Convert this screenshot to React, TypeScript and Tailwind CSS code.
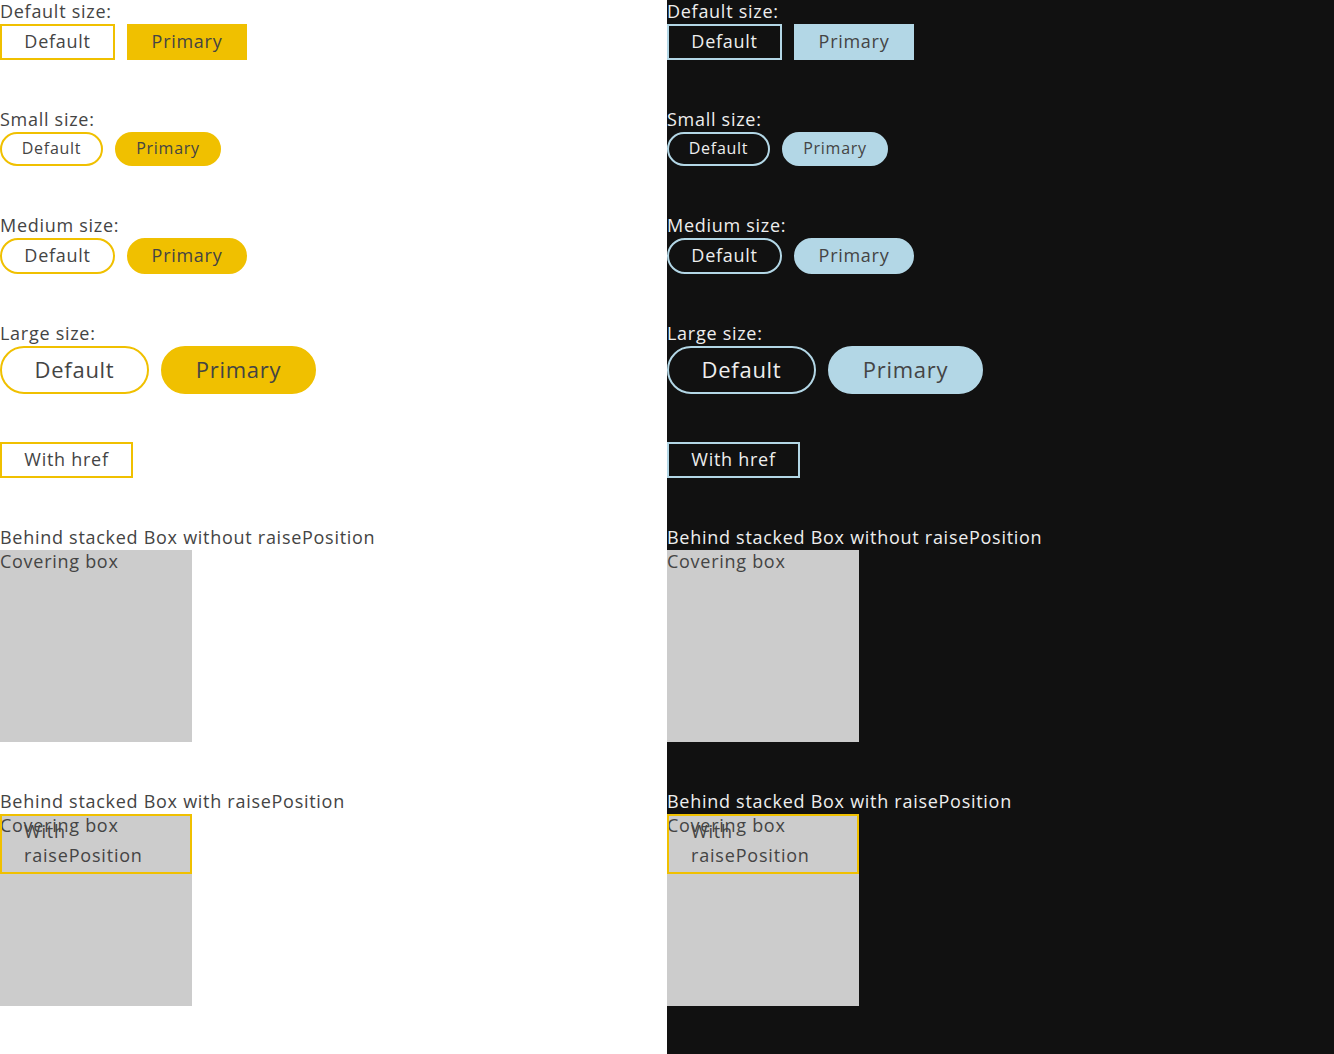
import React from "react";

function Panel({ dark }: { dark: boolean }) {
  const text = dark ? "text-[#eeeeee]" : "text-[#444444]";
  const outline = dark
    ? "border-2 border-[#b3d7e6] text-[#eeeeee]"
    : "border-2 border-[#f0c000] text-[#444444]";
  const primary = dark
    ? "border-2 border-[#b3d7e6] bg-[#b3d7e6] text-[#444444]"
    : "border-2 border-[#f0c000] bg-[#f0c000] text-[#444444]";
  const bg = dark ? "bg-[#111111]" : "bg-white";
  const base = "flex items-center justify-center whitespace-nowrap pb-[2px]";
  const label = "text-[18px] leading-[22px] pb-[2px]";

  return (
    <div className={`w-[667px] h-[1054px] ${bg} ${text} flex flex-col gap-[48px]`}>
      <div className="flex flex-col">
        <div className={label}>Default size:</div>
        <div className="flex gap-[12px]">
          <button className={`${base} ${outline} w-[115px] h-[36px] text-[18px] leading-[24px]`}>Default</button>
          <button className={`${base} ${primary} w-[120px] h-[36px] text-[18px] leading-[24px]`}>Primary</button>
        </div>
      </div>

      <div className="flex flex-col">
        <div className={label}>Small size:</div>
        <div className="flex gap-[12px]">
          <button className={`${base} ${outline} rounded-full w-[103px] h-[34px] text-[16px] leading-[22px]`}>Default</button>
          <button className={`${base} ${primary} rounded-full w-[106px] h-[34px] text-[16px] leading-[22px]`}>Primary</button>
        </div>
      </div>

      <div className="flex flex-col">
        <div className={label}>Medium size:</div>
        <div className="flex gap-[12px]">
          <button className={`${base} ${outline} rounded-full w-[115px] h-[36px] text-[18px] leading-[24px]`}>Default</button>
          <button className={`${base} ${primary} rounded-full w-[120px] h-[36px] text-[18px] leading-[24px]`}>Primary</button>
        </div>
      </div>

      <div className="flex flex-col">
        <div className={label}>Large size:</div>
        <div className="flex gap-[12px]">
          <button className={`${base} ${outline} rounded-full w-[149px] h-[48px] text-[22px] leading-[28px]`}>Default</button>
          <button className={`${base} ${primary} rounded-full w-[155px] h-[48px] text-[22px] leading-[28px]`}>Primary</button>
        </div>
      </div>

      <div className="flex">
        <a href="#" className={`${base} ${outline} w-[133px] h-[36px] text-[18px] leading-[24px]`}>With href</a>
      </div>

      <div className="flex flex-col">
        <div className={label}>Behind stacked Box without raisePosition</div>
        <div className="w-[192px] h-[192px] bg-[#cccccc] text-[#444444] text-[18px] leading-[22px]">Covering box</div>
      </div>

      <div className="flex flex-col">
        <div className={label}>Behind stacked Box with raisePosition</div>
        <div className="relative w-[192px] h-[192px] bg-[#cccccc] text-[#444444] text-[18px] leading-[22px]">
          <div>Covering box</div>
          <button className="absolute left-0 top-0 w-[192px] h-[60px] border-2 border-[#f0c000] px-[22px] pt-[3px] pb-[5px] text-left text-[18px] leading-[24px] text-[#444444] tracking-[0.045em]">
            With raisePosition
          </button>
        </div>
      </div>
    </div>
  );
}

export default function App() {
  return (
    <div className="flex w-[1334px] h-[1054px] overflow-hidden font-['Open_Sans',sans-serif] font-normal tracking-[0.045em]">
      <Panel dark={false} />
      <Panel dark={true} />
    </div>
  );
}
